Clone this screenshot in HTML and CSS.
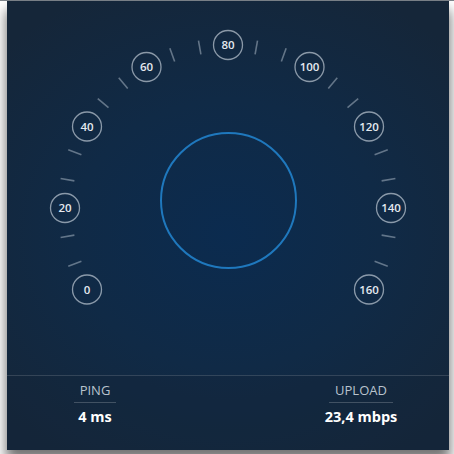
FILE: index.html
```html
<!DOCTYPE html>
<html>
<head>
<meta charset="utf-8">
<link rel="stylesheet" href="styles.css">
</head>
<body>
<div class="frame">
  <div class="panel">
    <div class="dial">
      <svg class="gauge" width="442" height="374" viewBox="0 0 442 374">
        <g class="ticks">
          <line x1="221" y1="37" x2="221" y2="51" transform="rotate(-110 221 207)"/>
          <line x1="221" y1="37" x2="221" y2="51" transform="rotate(-100 221 207)"/>
          <line x1="221" y1="37" x2="221" y2="51" transform="rotate(-80 221 207)"/>
          <line x1="221" y1="37" x2="221" y2="51" transform="rotate(-70 221 207)"/>
          <line x1="221" y1="37" x2="221" y2="51" transform="rotate(-50 221 207)"/>
          <line x1="221" y1="37" x2="221" y2="51" transform="rotate(-40 221 207)"/>
          <line x1="221" y1="37" x2="221" y2="51" transform="rotate(-20 221 207)"/>
          <line x1="221" y1="37" x2="221" y2="51" transform="rotate(-10 221 207)"/>
          <line x1="221" y1="37" x2="221" y2="51" transform="rotate(10 221 207)"/>
          <line x1="221" y1="37" x2="221" y2="51" transform="rotate(20 221 207)"/>
          <line x1="221" y1="37" x2="221" y2="51" transform="rotate(40 221 207)"/>
          <line x1="221" y1="37" x2="221" y2="51" transform="rotate(50 221 207)"/>
          <line x1="221" y1="37" x2="221" y2="51" transform="rotate(70 221 207)"/>
          <line x1="221" y1="37" x2="221" y2="51" transform="rotate(80 221 207)"/>
          <line x1="221" y1="37" x2="221" y2="51" transform="rotate(100 221 207)"/>
          <line x1="221" y1="37" x2="221" y2="51" transform="rotate(110 221 207)"/>
        </g>
        <g class="marks">
          <circle cx="80" cy="288.5" r="14.5"/><text x="80" y="292.5">0</text>
          <circle cx="58" cy="207" r="14.5"/><text x="58" y="211">20</text>
          <circle cx="80" cy="125.5" r="14.5"/><text x="80" y="129.5">40</text>
          <circle cx="139.5" cy="66" r="14.5"/><text x="139.5" y="70">60</text>
          <circle cx="221" cy="44" r="14.5"/><text x="221" y="48">80</text>
          <circle cx="302.5" cy="66" r="14.5"/><text x="302.5" y="70">100</text>
          <circle cx="362" cy="125.5" r="14.5"/><text x="362" y="129.5">120</text>
          <circle cx="384" cy="207" r="14.5"/><text x="384" y="211">140</text>
          <circle cx="362" cy="288.5" r="14.5"/><text x="362" y="292.5">160</text>
        </g>
        <circle class="ring" cx="221.5" cy="199.5" r="67.5"/>
      </svg>
    </div>
    <div class="stats">
      <div class="stat">
        <span class="label">PING</span>
        <span class="value">4 ms</span>
      </div>
      <div class="stat">
        <span class="label">UPLOAD</span>
        <span class="value">23,4 mbps</span>
      </div>
    </div>
  </div>
</div>
</body>
</html>
```
FILE: styles.css
```css
html, body {
  margin: 0;
  padding: 0;
  background: #ffffff;
}
body {
  font-family: "Open Sans", "DejaVu Sans", sans-serif;
  width: 454px;
  height: 454px;
  overflow: hidden;
}
.frame {
  padding: 0 5px 0 7px;
  border-top: 1px solid #7d848b;
}
.panel {
  width: 442px;
  height: 449px;
  display: flex;
  flex-direction: column;
  background: radial-gradient(ellipse 70% 60% at 50% 52%, #0b2b4f 0%, #102a46 50%, #152639 100%);
  box-shadow: 0 10px 12px 1px rgba(0, 0, 0, 0.55);
}
.dial {
  height: 374px;
  flex: none;
}
.gauge {
  display: block;
}
.ticks line {
  stroke: rgba(200, 210, 222, 0.45);
  stroke-width: 1.6;
}
.marks circle {
  fill: none;
  stroke: rgba(220, 228, 236, 0.6);
  stroke-width: 1.3;
}
.marks text {
  fill: #e4e9ef;
  font-family: "Open Sans", "DejaVu Sans", sans-serif;
  font-size: 11.5px;
  font-weight: 600;
  text-anchor: middle;
}
.ring {
  fill: none;
  stroke: #1f78bd;
  stroke-width: 2;
}
.stats {
  flex: 1;
  border-top: 1px solid rgba(255, 255, 255, 0.14);
  display: flex;
  justify-content: space-between;
  padding: 5px 34px 0 34px;
  background: rgba(21, 38, 57, 0.35);
}
.stat {
  width: 108px;
  display: flex;
  flex-direction: column;
  align-items: center;
}
.label {
  color: #b9c3cd;
  font-size: 13px;
  line-height: 18px;
  padding: 0 6px 3px 6px;
  border-bottom: 1px solid rgba(255, 255, 255, 0.2);
}
.value {
  color: #ffffff;
  font-size: 14.5px;
  font-weight: 700;
  line-height: 20px;
  margin-top: 4px;
}
```
